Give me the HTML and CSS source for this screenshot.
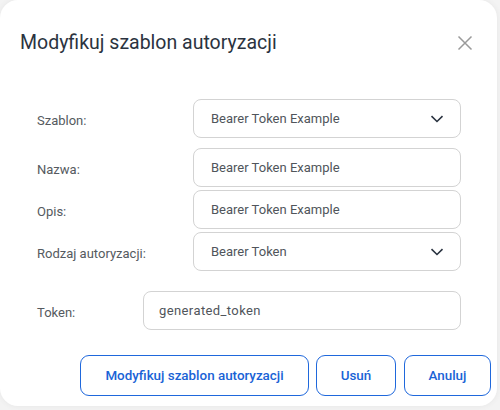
FILE: index.html
```html
<!DOCTYPE html>
<html lang="pl">
<head>
<meta charset="utf-8">
<link rel="stylesheet" href="styles.css">
</head>
<body>
<div class="dialog">
  <div class="header">
    <h1 class="title">Modyfikuj szablon autoryzacji</h1>
    <button class="close" aria-label="Zamknij">
      <svg width="16" height="16" viewBox="0 0 16 16"><path d="M1.5 1.5L14.5 14.5M14.5 1.5L1.5 14.5" stroke="#9a9a9a" stroke-width="1.5" fill="none"/></svg>
    </button>
  </div>
  <div class="form">
    <div class="row r1">
      <label class="label">Szablon:</label>
      <div class="field select"><span>Bearer Token Example</span>
        <svg class="chev" width="14" height="8" viewBox="0 0 14 8"><path d="M1.5 1.2L7 6.5L12.5 1.2" stroke="#2a3340" stroke-width="1.6" fill="none"/></svg>
      </div>
    </div>
    <div class="row r2">
      <label class="label">Nazwa:</label>
      <div class="field"><span>Bearer Token Example</span></div>
    </div>
    <div class="row r3">
      <label class="label">Opis:</label>
      <div class="field"><span>Bearer Token Example</span></div>
    </div>
    <div class="row r4">
      <label class="label">Rodzaj autoryzacji:</label>
      <div class="field select"><span>Bearer Token</span>
        <svg class="chev" width="14" height="8" viewBox="0 0 14 8"><path d="M1.5 1.2L7 6.5L12.5 1.2" stroke="#2a3340" stroke-width="1.6" fill="none"/></svg>
      </div>
    </div>
    <div class="row token">
      <label class="label short">Token:</label>
      <div class="field tfield"><span>generated_token</span></div>
    </div>
  </div>
  <div class="actions">
    <button class="btn b1">Modyfikuj szablon autoryzacji</button>
    <button class="btn b2">Usuń</button>
    <button class="btn b3">Anuluj</button>
  </div>
</div>
</body>
</html>
```
FILE: styles.css
```css
* { box-sizing: border-box; }
html, body { margin: 0; padding: 0; }
body {
  width: 500px;
  height: 410px;
  background: #f3f3f3;
  font-family: Roboto, "Liberation Sans", sans-serif;
  overflow: hidden;
}
.dialog {
  width: 497px;
  height: 406px;
  background: #fff;
  border-radius: 18px;
  box-shadow: 0 0 6px rgba(0,0,0,0.06);
  position: relative;
}
.header {
  display: flex;
  align-items: center;
  justify-content: space-between;
  padding: 30px 24px 0 20px;
  height: 56px;
}
.title {
  margin: 0;
  font-size: 19.5px;
  line-height: 26px;
  font-weight: 400;
  color: #2b3340;
}
.close {
  background: none;
  border: none;
  padding: 0;
  width: 16px;
  height: 16px;
  display: flex;
}
.form {
  padding: 43px 36px 0 37px;
}
.row {
  display: flex;
  align-items: center;
}
.r1 { margin-bottom: 10px; }
.r2, .r3 { margin-bottom: 3px; }
.r4 { margin-bottom: 20px; }
.label {
  width: 156px;
  flex: none;
  font-size: 13px;
  color: #555a60;
  padding-top: 4px;
}
.label.short { width: 106px; }
.field {
  flex: 1;
  height: 39px;
  border: 1px solid #d3d3d3;
  border-radius: 8px;
  display: flex;
  align-items: center;
  justify-content: space-between;
  padding: 0 16px 0 17px;
  font-size: 13px;
  color: #50555b;
}
.tfield { padding-left: 15px; }
.tfield span { letter-spacing: 0.4px; }
.chev { flex: none; }
.actions {
  display: flex;
  gap: 7px;
  padding: 25px 0 0 80px;
}
.btn {
  height: 41px;
  border: 1px solid #1f68dc;
  border-radius: 9px;
  background: #fff;
  color: #1a63d6;
  font-family: Roboto, "Liberation Sans", sans-serif;
  font-size: 13.4px;
  font-weight: 500;
  padding: 0;
}
.b1 { width: 229px; }
.b2 { width: 80px; }
.b3 { width: 87px; margin-left: 1px; }
```
